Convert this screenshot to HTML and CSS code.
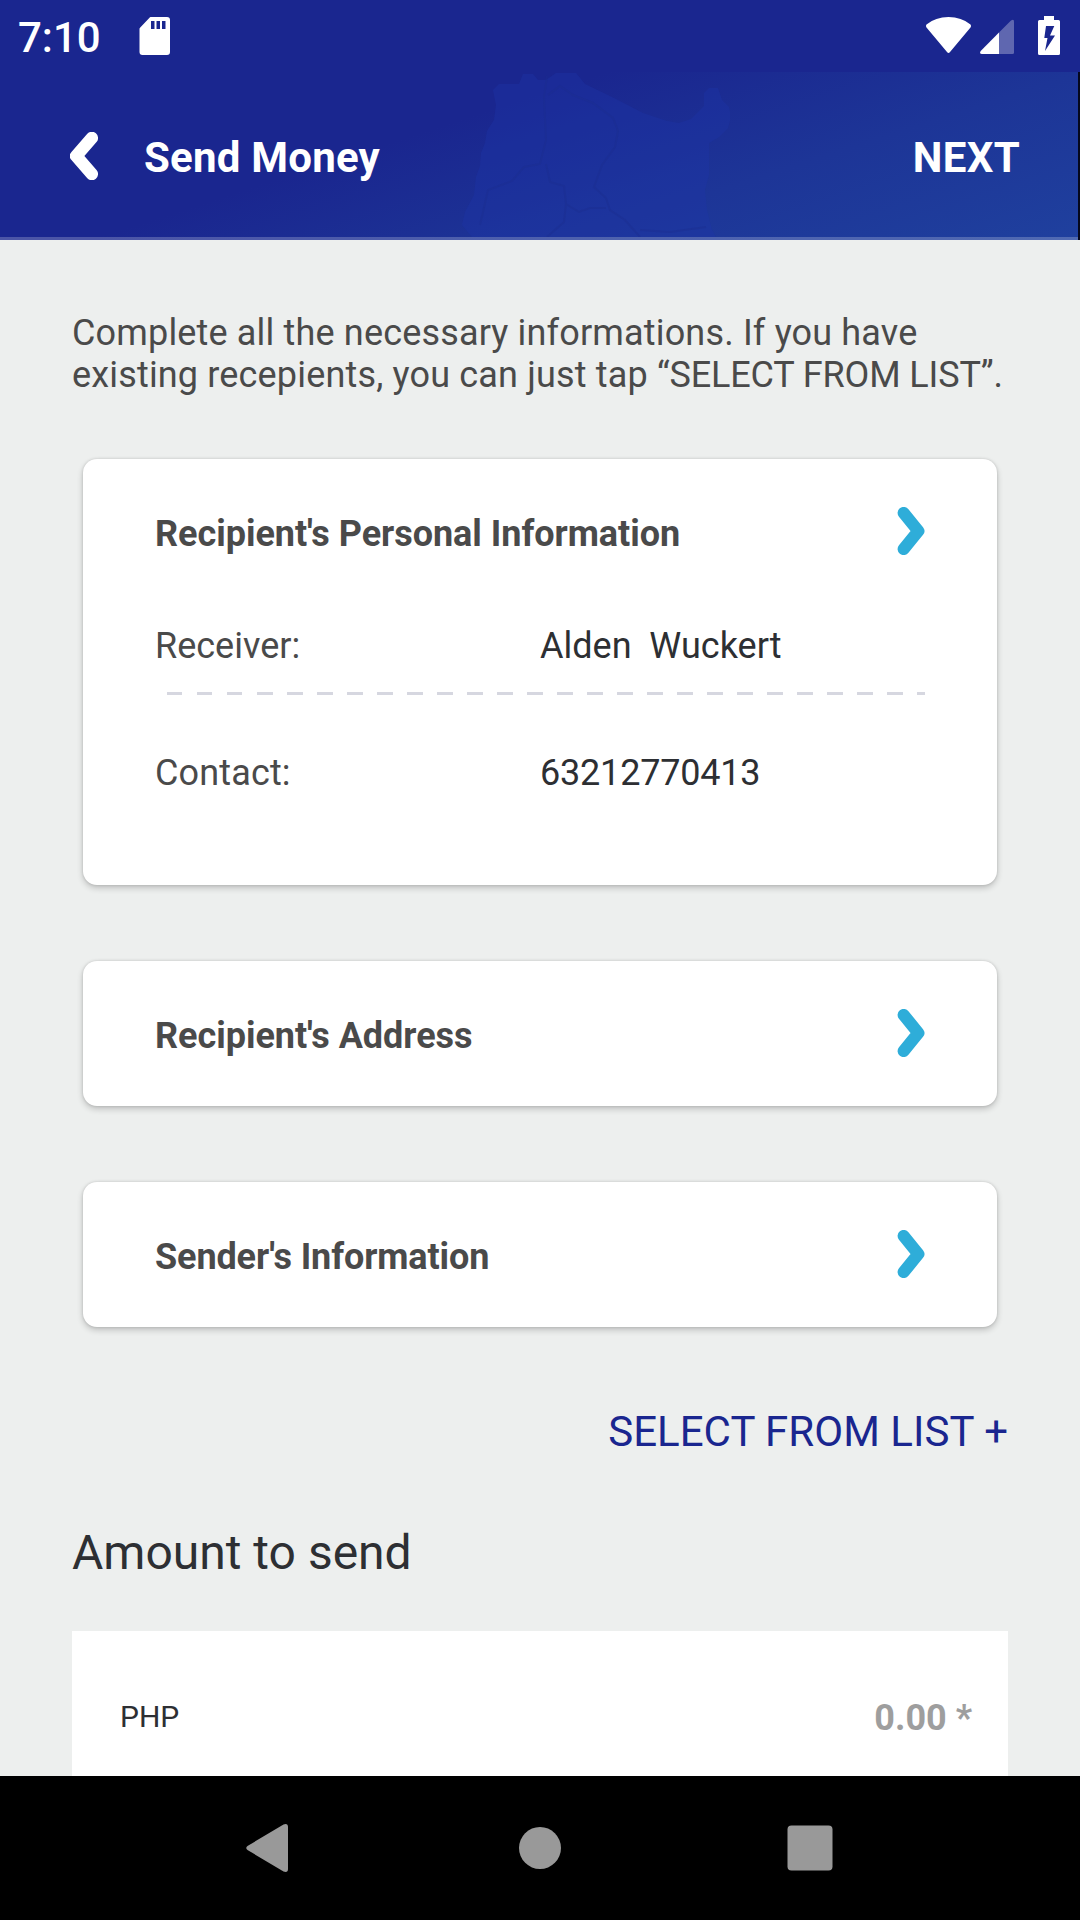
FILE: index.html
```html
<!DOCTYPE html>
<html lang="en">
<head>
<meta charset="utf-8">
<title>Send Money</title>
<link rel="stylesheet" href="styles.css">
</head>
<body>
<div class="screen">
  <div class="status-bar">
    <span class="clock">7:10</span>
    <svg class="icon-sd" width="32" height="38" viewBox="0 0 32 38"><path fill="#fff" fill-rule="evenodd" d="M11.500 0H28Q31 0 31 3V35Q31 38 28 38H3.500Q.5 38 .5 35V12Q.5 11.300 1 10.800L10.500 .8Q11 0 11.500 0ZM12 4V12H15.500V4ZM17.500 4V12H21V4ZM23 4V12H26.500V4Z"/></svg>
    <div class="status-icons">
      <svg width="46" height="38" viewBox="-.5 0 46 38"><path fill="#fff" d="M1 7.500Q10 0 23 0T45 7.500Q46 9 45 10.500L24.500 35Q23 37 21.500 35L1 10.500Q0 9 1 7.500Z"/></svg>
      <svg class="icon-signal" width="34" height="38" viewBox="0 0 34 38"><path fill="#fff" fill-opacity=".3" d="M19 15.500 31 3.500Q34 1.500 34 4.500V35.500Q34 37 32.500 37H19Z"/><path fill="#fff" d="M19 15.500V37H2Q-1 37 .7 34Z"/></svg>
      <svg class="icon-battery" width="22" height="39" viewBox="0 0 22 39"><path fill="#fff" fill-rule="evenodd" d="M6 0H16V4H20.500Q22 4 22 5.500V37.500Q22 39 20.500 39H1.500Q0 39 0 37.500V5.500Q0 4 1.500 4H6ZM8 10 6.300 22H9.500L7 35 17 19.500H12L16.300 10Z"/></svg>
    </div>
  </div>

  <header class="app-bar">
    <svg class="map" width="270" height="165" viewBox="460 72 270 165" fill="none">
      <path fill="#1c35a8" fill-opacity=".38" d="M523 74 519 84 499 84 493 90 496 105 494 120 487 131 485 143 481 153 480 166 476 177 474 195 465 212 462 225 472 237H716L712 230 707 210 705 190 709 175V143L719 137 728 128 731 117 729 107 722 100 718 88H709L704 93V106L691 119 679 123 667 121 643 113 614 98 585 84 576 73H556L546 80 538 80 533 74Z"/>
      <path stroke="#1b2c8e" stroke-opacity=".4" stroke-width="2" d="M547 76 544 97 546 140 540 164 524 167 512 181 488 190 480 225M548 95 560 86 573 95 593 103 613 118 618 131 615 147 602 165 594 187 606 198 610 210 625 220 640 237M546 164 550 182 564 186 566 204 564 222 547 237M566 204 579 212 590 208 606 208M640 230 670 232 706 227"/>
    </svg>
    <svg class="back" width="28" height="48" viewBox="0 0 28 48"><path d="M21.800 6 6.200 24 21.800 42" fill="none" stroke="#fff" stroke-width="12.500" stroke-linecap="round" stroke-linejoin="round"/></svg>
    <h1 class="title">Send Money</h1>
    <span class="next">NEXT</span>
  </header>

  <main class="content">
    <p class="intro"><span class="line">Complete all the necessary informations. If you have</span> <span class="line">existing recepients, you can just tap <span class="action">“SELECT FROM LIST”.</span></span></p>

    <div class="cards">
      <section class="card card-open">
        <div class="card-head">
          <h2>Recipient's Personal Information</h2>
          <svg width="28" height="48" viewBox="0 0 28 48"><path class="chevron" d="M6.700 6 21.300 24 6.700 42"/></svg>
        </div>
        <div class="row"><span class="label">Receiver:</span><span class="value">Alden&nbsp; Wuckert</span></div>
        <div class="dashes"></div>
        <div class="row"><span class="label contact">Contact:</span><span class="value number">63212770413</span></div>
      </section>
      <section class="card">
        <div class="card-head">
          <h2>Recipient's Address</h2>
          <svg width="28" height="48" viewBox="0 0 28 48"><path class="chevron" d="M6.700 6 21.300 24 6.700 42"/></svg>
        </div>
      </section>
      <section class="card">
        <div class="card-head">
          <h2 class="sender">Sender's Information</h2>
          <svg width="28" height="48" viewBox="0 0 28 48"><path class="chevron" d="M6.700 6 21.300 24 6.700 42"/></svg>
        </div>
      </section>
    </div>

    <div class="select-list">SELECT FROM LIST +</div>
    <h2 class="amount-title">Amount to send</h2>
    <div class="amount-box">
      <span class="currency">PHP</span>
      <span class="amount">0.00 *</span>
    </div>
  </main>

  <nav class="nav-bar">
    <svg width="42" height="48" viewBox="0 0 42 48"><path d="M1.500 22 37.500 .5Q42-1 42 3V45Q42 49 37.500 47.500L1.500 26Q-1 24 1.500 22Z"/></svg>
    <svg class="home" width="42" height="42" viewBox="0 0 42 42"><circle cx="21" cy="21" r="21"/></svg>
    <svg width="46" height="46" viewBox="0 0 46 46"><rect x=".5" y=".5" width="45" height="45" rx="4"/></svg>
  </nav>
</div>
</body>
</html>
```
FILE: styles.css
```css
* { box-sizing: border-box; }

body {
  margin: 0;
  font-family: Roboto, "Liberation Sans", sans-serif;
  background: #edefee;
}

h1, h2, p { margin: 0; }
svg { display: block; flex: none; }

.screen {
  width: 1080px;
  height: 1920px;
  display: flex;
  flex-direction: column;
  overflow: hidden;
}

.status-bar {
  flex: none;
  height: 72px;
  display: flex;
  align-items: flex-start;
  padding: 0 20px 0 18px;
  background: #1a268f;
  color: #fff;
}
.clock {
  width: 121px;
  padding-top: 13px;
  font-size: 42px;
  line-height: 50px;
  font-weight: 500;
}
.icon-sd { margin-top: 17px; }
.status-icons {
  display: flex;
  margin-left: auto;
  padding-top: 17px;
}
.icon-signal { margin-left: 9px; }
.icon-battery { margin: -1px 0 0 24px; }

.app-bar {
  position: relative;
  flex: none;
  height: 168px;
  display: flex;
  align-items: center;
  padding: 3px 58px 0 70px;
  border-right: 2px solid #05081c;
  background: linear-gradient(162deg, #1a268f 0%, #1a268f 38%, #1d3597 68%, #1f409e 100%);
  color: #fff;
}
.app-bar::after {
  content: "";
  position: absolute;
  left: 0;
  right: 0;
  bottom: 0;
  height: 3px;
  background: rgba(255, 255, 255, .22);
}
.map {
  position: absolute;
  left: 460px;
  top: 0;
}
.back { margin-bottom: 3px; }
.title {
  margin-left: 46px;
  font-size: 42px;
  line-height: 50px;
  font-weight: 700;
  letter-spacing: .22px;
}
.next {
  margin-left: auto;
  font-size: 42px;
  line-height: 50px;
  font-weight: 700;
  letter-spacing: .3px;
}

.content {
  flex: 1;
  min-height: 0;
  overflow: hidden;
  padding: 72px 72px 0;
}
.intro {
  font-size: 36px;
  line-height: 42.200px;
  letter-spacing: .165px;
  color: #4a4a4a;
}
.line {
  display: block;
  white-space: nowrap;
}
.action { letter-spacing: -.14px; }
.cards {
  display: flex;
  flex-direction: column;
  gap: 76px;
  margin: 63px 11px 0;
}
.card {
  height: 145px;
  padding: 48px 72px 0;
  border-radius: 14px;
  background: #fff;
  box-shadow: 0 3px 6px rgba(0, 0, 0, .2), 0 0 3px rgba(0, 0, 0, .14);
}
.card-open { height: 426px; }
.card-head {
  display: flex;
  align-items: center;
  justify-content: space-between;
  height: 48px;
}
.card-head h2 {
  padding-top: 6px;
  font-size: 36px;
  line-height: 42px;
  font-weight: 700;
  letter-spacing: -.03px;
  color: #4a4a4a;
}
.card-head .sender { letter-spacing: -.11px; }
.chevron {
  fill: none;
  stroke: #2eadd9;
  stroke-width: 12.200px;
  stroke-linecap: round;
  stroke-linejoin: round;
}
.row {
  display: flex;
  font-size: 36px;
  line-height: 42px;
}
.card-head + .row { margin-top: 70px; }
.label { width: 385px; color: #4a4a4a; }
.contact { letter-spacing: .15px; }
.value { color: #2d2f33; }
.number { letter-spacing: -.2px; }
.dashes {
  height: 3px;
  margin: 25px 0 57px 12px;
  background: repeating-linear-gradient(90deg, #d6d7e0 0 15.500px, transparent 15.500px 30px);
}

.select-list {
  margin-top: 80px;
  font-size: 42px;
  line-height: 50px;
  letter-spacing: .03px;
  text-align: right;
  color: #1a268f;
}
.amount-title {
  margin-top: 68px;
  font-size: 48px;
  line-height: 56px;
  font-weight: 400;
  color: #2d2f33;
}
.amount-box {
  display: flex;
  justify-content: space-between;
  align-items: flex-start;
  height: 200px;
  margin-top: 50px;
  padding: 65px 36px 0 48px;
  background: #fff;
}
.currency {
  padding-top: 3px;
  font-size: 30px;
  line-height: 36px;
  color: #2d2f33;
}
.amount {
  padding-top: 1px;
  font-size: 36px;
  line-height: 42px;
  font-weight: 700;
  color: #9e9e9e;
}

.nav-bar {
  flex: none;
  height: 144px;
  display: flex;
  align-items: center;
  justify-content: space-between;
  padding: 0 247px 0 246px;
  background: #000;
}
.nav-bar svg { fill: #999; }
.nav-bar .home { margin-left: 4px; }
```
